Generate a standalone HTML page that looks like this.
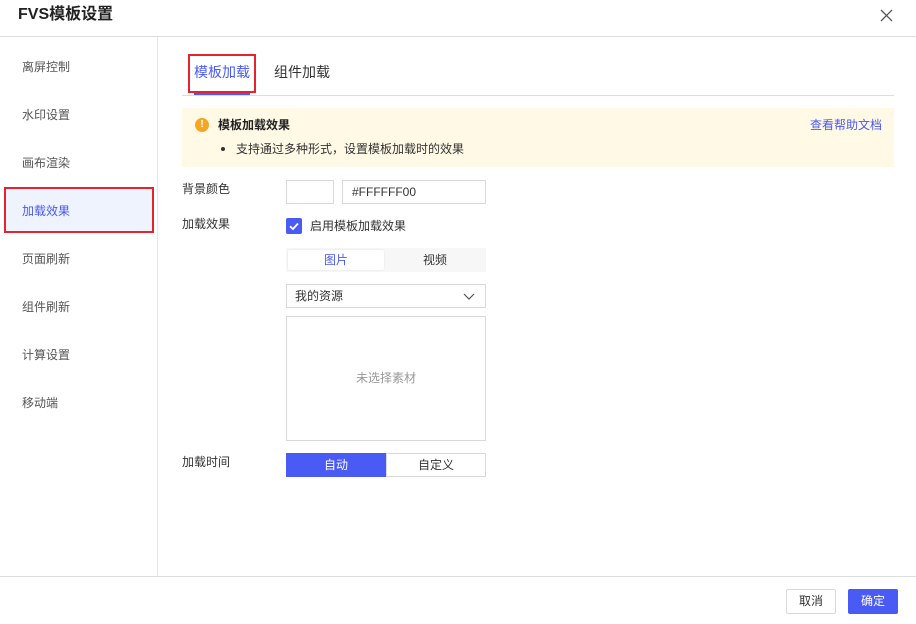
<!DOCTYPE html>
<html><head><meta charset="utf-8"><style>
*{box-sizing:border-box;margin:0;padding:0}
body{width:916px;height:624px;background:#fff;font-family:"Liberation Sans","Noto Sans CJK SC",sans-serif;font-size:12px;color:#333;position:relative;overflow:hidden}
.a{position:absolute}
.title{left:18px;top:4px;font-size:16px;font-weight:bold;color:#222;line-height:22px}
.hl{left:0;top:36px;width:916px;height:1px;background:#ddd}
.side{left:157px;top:37px;width:1px;height:540px;background:#e6e6e6}
.nav{left:22px;color:#555;line-height:16px}
.blue{color:#4a5af5}
.box{border:1px solid #d9d9d9;background:#fff}
.lab{left:182px;color:#333;line-height:16px}
</style></head><body>
<div class="a title">FVS模板设置</div>
<svg class="a" style="left:880px;top:9px" width="13" height="13" viewBox="0 0 13 13"><path d="M1 1L12 12M12 1L1 12" stroke="#555" stroke-width="1.3"/></svg>
<div class="a hl"></div>
<div class="a side"></div>
<div class="a" style="left:4px;top:187px;width:150px;height:46px;background:#eef3fe;border:2px solid #e8212f"></div>
<div class="a nav" style="top:59px">离屏控制</div>
<div class="a nav" style="top:107px">水印设置</div>
<div class="a nav" style="top:155px">画布渲染</div>
<div class="a nav blue" style="top:203px">加载效果</div>
<div class="a nav" style="top:251px">页面刷新</div>
<div class="a nav" style="top:299px">组件刷新</div>
<div class="a nav" style="top:347px">计算设置</div>
<div class="a nav" style="top:395px">移动端</div>

<div class="a" style="left:182px;top:95px;width:712px;height:1px;background:#ddd"></div>
<div class="a" style="left:194px;top:93px;width:56px;height:2px;background:#4a5af5"></div>
<div class="a blue" style="left:194px;top:63px;font-size:14px;line-height:18px">模板加载</div>
<div class="a" style="left:274px;top:63px;font-size:14px;line-height:18px;color:#333">组件加载</div>
<div class="a" style="left:188px;top:54px;width:68px;height:39px;border:2px solid #e8212f"></div>

<div class="a" style="left:182px;top:108px;width:712px;height:59px;background:#fff9e6"></div>
<div class="a" style="left:195px;top:118px;width:14px;height:14px;border-radius:50%;background:#f5a623;color:#fff;font-size:10px;font-weight:bold;text-align:center;line-height:14px">!</div>
<div class="a" style="left:218px;top:117px;font-weight:bold;line-height:16px;color:#222">模板加载效果</div>
<div class="a" style="left:221px;top:147px;width:4px;height:4px;border-radius:50%;background:#333"></div>
<div class="a" style="left:236px;top:141px;line-height:16px">支持通过多种形式，设置模板加载时的效果</div>
<div class="a blue" style="left:810px;top:117px;line-height:16px">查看帮助文档</div>

<div class="a lab" style="top:181px">背景颜色</div>
<div class="a box" style="left:286px;top:180px;width:48px;height:24px"></div>
<div class="a box" style="left:342px;top:180px;width:144px;height:24px;padding-left:9px;line-height:22px">#FFFFFF00</div>

<div class="a lab" style="top:216px">加载效果</div>
<div class="a" style="left:286px;top:218px;width:16px;height:16px;border-radius:2px;background:#4a5af5"></div>
<svg class="a" style="left:286px;top:218px" width="16" height="16"><path d="M4 8.3L7 11L12 5.5" stroke="#fff" stroke-width="1.8" fill="none"/></svg>
<div class="a" style="left:310px;top:218px;line-height:16px">启用模板加载效果</div>

<div class="a" style="left:286px;top:248px;width:200px;height:24px;background:#f7f7f7"></div>
<div class="a blue" style="left:288px;top:250px;width:96px;height:20px;background:#fff;border-radius:2px;text-align:center;line-height:20px;box-shadow:0 0 2px rgba(0,0,0,.08)">图片</div>
<div class="a" style="left:386px;top:250px;width:98px;text-align:center;line-height:20px">视频</div>

<div class="a box" style="left:286px;top:284px;width:200px;height:24px;padding-left:8px;line-height:22px">我的资源</div>
<svg class="a" style="left:463px;top:291px" width="12" height="10"><path d="M1 3L6 8L11 3" stroke="#555" stroke-width="1.2" fill="none"/></svg>
<div class="a box" style="left:286px;top:316px;width:200px;height:125px;text-align:center;line-height:123px;color:#999">未选择素材</div>

<div class="a lab" style="top:454px">加载时间</div>
<div class="a" style="left:286px;top:453px;width:100px;height:24px;background:#4a5af5;color:#fff;text-align:center;line-height:24px">自动</div>
<div class="a box" style="left:386px;top:453px;width:100px;height:24px;text-align:center;line-height:22px">自定义</div>

<div class="a" style="left:0;top:576px;width:916px;height:1px;background:#ddd"></div>
<div class="a box" style="left:786px;top:589px;width:50px;height:25px;text-align:center;line-height:23px;border-radius:2px">取消</div>
<div class="a" style="left:848px;top:589px;width:50px;height:25px;text-align:center;line-height:25px;border-radius:2px;background:#4a5af5;color:#fff">确定</div>
</body></html>
